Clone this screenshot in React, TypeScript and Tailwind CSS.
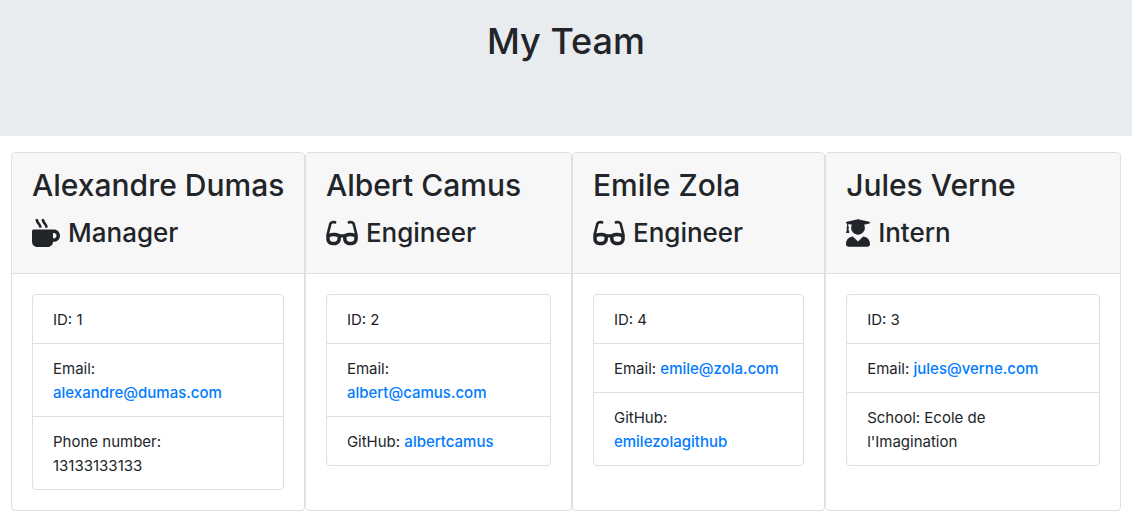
import type { ReactNode } from "react";
import { FaMugHot, FaGlasses, FaUserGraduate } from "react-icons/fa";

const linkClass = "font-medium text-[#007bff] hover:underline";

type Member = { name: string; role: string; icon: ReactNode; width: string; rows: ReactNode[] };

const members: Member[] = [
  {
    name: "Alexandre Dumas", role: "Manager", icon: <FaMugHot className="h-7 w-7" />, width: "grow-[294]",
    rows: ["ID: 1", <>Email: <br /><a className={linkClass} href="mailto:alexandre@dumas.com">alexandre@dumas.com</a></>, <>Phone number: <br />13133133133</>],
  },
  {
    name: "Albert Camus", role: "Engineer", icon: <FaGlasses className="h-7 w-8" />, width: "grow-[267]",
    rows: ["ID: 2", <>Email: <br /><a className={linkClass} href="mailto:albert@camus.com">albert@camus.com</a></>, <>GitHub: <a className={linkClass} href="https://github.com/albertcamus">albertcamus</a></>],
  },
  {
    name: "Emile Zola", role: "Engineer", icon: <FaGlasses className="h-7 w-8" />, width: "grow-[253]",
    rows: ["ID: 4", <>Email: <a className={linkClass} href="mailto:emile@zola.com">emile@zola.com</a></>, <>GitHub: <br /><a className={linkClass} href="https://github.com/emilezolagithub">emilezolagithub</a></>],
  },
  {
    name: "Jules Verne", role: "Intern", icon: <FaUserGraduate className="h-7 w-6" />, width: "grow-[296]",
    rows: ["ID: 3", <>Email: <a className={linkClass} href="mailto:jules@verne.com">jules@verne.com</a></>, <>School: Ecole de <br />l'Imagination</>],
  },
];

export default function App() {
  return (
    <div className="bg-white font-['Inter',sans-serif] text-[15px] text-[#212529]">
      <header className="mb-4 bg-[#e9ecef] px-4 pt-[17px] pb-[71px]">
        <h1 className="text-center text-[36px] leading-12 font-medium">My Team</h1>
      </header>
      <main className="flex px-[11px] pb-3">
        {members.map((m) => (
          <section key={m.name} className={`min-w-0 basis-0 rounded border border-[#dfdfdf] ${m.width}`}>
            <div className="rounded-t-[3px] border-b border-[#dfdfdf] bg-[#f7f7f7] px-5 pt-3 pb-5">
              <h2 className="mb-2 text-[30px] leading-10 font-medium whitespace-nowrap">{m.name}</h2>
              <h3 className="flex items-center gap-2 text-[26px] leading-10 font-medium">{m.icon}{m.role}</h3>
            </div>
            <div className="p-5">
              <ul className="divide-y divide-[#dfdfdf] rounded border border-[#dfdfdf]">
                {m.rows.map((row, i) => <li key={i} className="px-5 pt-[13px] pb-[11px] leading-6">{row}</li>)}
              </ul>
            </div>
          </section>
        ))}
      </main>
    </div>
  );
}
